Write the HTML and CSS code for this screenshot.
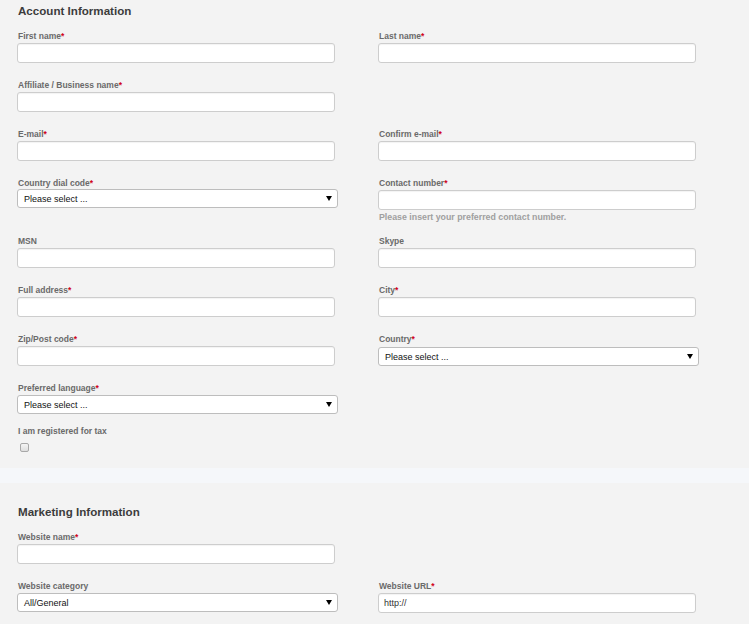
FILE: index.html
```html
<!DOCTYPE html>
<html lang="en">
<head>
<meta charset="utf-8">
<title>Account Information</title>
<link rel="stylesheet" href="styles.css">
</head>
<body>
<section class="panel panel-first">
  <h2 class="panel-title">Account Information</h2>
  <div class="grid">
    <div class="field"><label class="lbl">First name<span class="req">*</span></label><input class="txt" type="text"></div>
    <div class="field"><label class="lbl">Last name<span class="req">*</span></label><input class="txt" type="text"></div>

    <div class="field"><label class="lbl">Affiliate / Business name<span class="req">*</span></label><input class="txt" type="text"></div>
    <div class="field"></div>

    <div class="field"><label class="lbl">E-mail<span class="req">*</span></label><input class="txt" type="text"></div>
    <div class="field"><label class="lbl">Confirm e-mail<span class="req">*</span></label><input class="txt" type="text"></div>

    <div class="field"><label class="lbl">Country dial code<span class="req">*</span></label>
      <div class="sel sel-up"><span>Please select ...</span><svg class="arr" width="6" height="5" viewBox="0 0 6 5"><polygon points="0,0 6,0 3,5" fill="#000"/></svg></div></div>
    <div class="field"><label class="lbl">Contact number<span class="req">*</span></label><input class="txt" type="text">
      <p class="help">Please insert your preferred contact number.</p></div>

    <div class="field"><label class="lbl">MSN</label><input class="txt" type="text"></div>
    <div class="field"><label class="lbl">Skype</label><input class="txt" type="text"></div>

    <div class="field"><label class="lbl">Full address<span class="req">*</span></label><input class="txt" type="text"></div>
    <div class="field"><label class="lbl">City<span class="req">*</span></label><input class="txt" type="text"></div>

    <div class="field"><label class="lbl">Zip/Post code<span class="req">*</span></label><input class="txt" type="text"></div>
    <div class="field"><label class="lbl">Country<span class="req">*</span></label>
      <div class="sel sel-down"><span>Please select ...</span><svg class="arr" width="6" height="5" viewBox="0 0 6 5"><polygon points="0,0 6,0 3,5" fill="#000"/></svg></div></div>

    <div class="field"><label class="lbl">Preferred language<span class="req">*</span></label>
      <div class="sel"><span>Please select ...</span><svg class="arr" width="6" height="5" viewBox="0 0 6 5"><polygon points="0,0 6,0 3,5" fill="#000"/></svg></div></div>
    <div class="field"></div>
  </div>
  <div class="tax">
    <label class="lbl">I am registered for tax</label>
    <input class="chk" type="checkbox">
  </div>
</section>
<div class="band"></div>
<section class="panel panel-second">
  <h2 class="panel-title">Marketing Information</h2>
  <div class="grid">
    <div class="field"><label class="lbl">Website name<span class="req">*</span></label><input class="txt" type="text"></div>
    <div class="field"></div>

    <div class="field"><label class="lbl">Website category</label>
      <div class="sel"><span>All/General</span><svg class="arr" width="6" height="5" viewBox="0 0 6 5"><polygon points="0,0 6,0 3,5" fill="#000"/></svg></div></div>
    <div class="field"><label class="lbl">Website URL<span class="req">*</span></label><input class="txt" type="text" value="http://"></div>
  </div>
</section>
</body>
</html>
```
FILE: styles.css
```css
* { box-sizing: border-box; }
html, body { margin: 0; padding: 0; }
body {
  background: #f3f3f3;
  font-family: "Liberation Sans", Arial, sans-serif;
  color: #333;
  width: 749px;
  overflow: hidden;
}
.panel { background: #f3f3f3; padding-left: 17px; }
.panel-first { padding-top: 4px; padding-bottom: 16px; }
.panel-second { padding-top: 22px; padding-bottom: 40px; }
.band { height: 15px; background: #f5f7fa; }
.panel-title {
  margin: 0 0 13px 1px;
  font-size: 11.6px;
  line-height: 14px;
  font-weight: bold;
  color: #3c3c3c;
}
.grid {
  display: grid;
  grid-template-columns: 361px 361px;
  row-gap: 17px;
}
.field { display: flex; flex-direction: column; align-items: flex-start; }
.lbl {
  display: block;
  font-size: 8.5px;
  line-height: 11px;
  font-weight: bold;
  color: #6a6a6a;
  margin: 0 0 1px 1px;
}
.req { color: #d0021b; }
.txt {
  width: 318px;
  height: 20px;
  margin: 0;
  padding: 0 5px;
  border: 1px solid #cdcdcd;
  border-radius: 3px;
  background: #fff;
  box-shadow: inset 0 1px 1px rgba(0,0,0,0.05);
  font-family: "Liberation Sans", Arial, sans-serif;
  font-size: 9px;
  color: #333;
  outline: none;
}
.sel {
  width: 321px;
  height: 19px;
  display: flex;
  align-items: center;
  justify-content: space-between;
  padding: 0 5px 0 6px;
  border: 1px solid #bdbdbd;
  border-radius: 3px;
  background: #fff;
  font-size: 9px;
  color: #111;
}
.sel-up { margin-top: -1px; }
.sel-down { margin-top: 1px; }
.arr { display: block; }
.help {
  margin: 2px 0 -3px 1px;
  font-size: 8.8px;
  line-height: 10px;
  font-weight: bold;
  color: #a0a0a0;
}
.tax { margin-top: 12px; }
.chk {
  appearance: none;
  -webkit-appearance: none;
  display: block;
  width: 9px;
  height: 9px;
  margin: 6px 0 0 3px;
  border: 1px solid #a8a8a8;
  border-radius: 2px;
  background: linear-gradient(#f4f4f4, #dedede);
}
```
